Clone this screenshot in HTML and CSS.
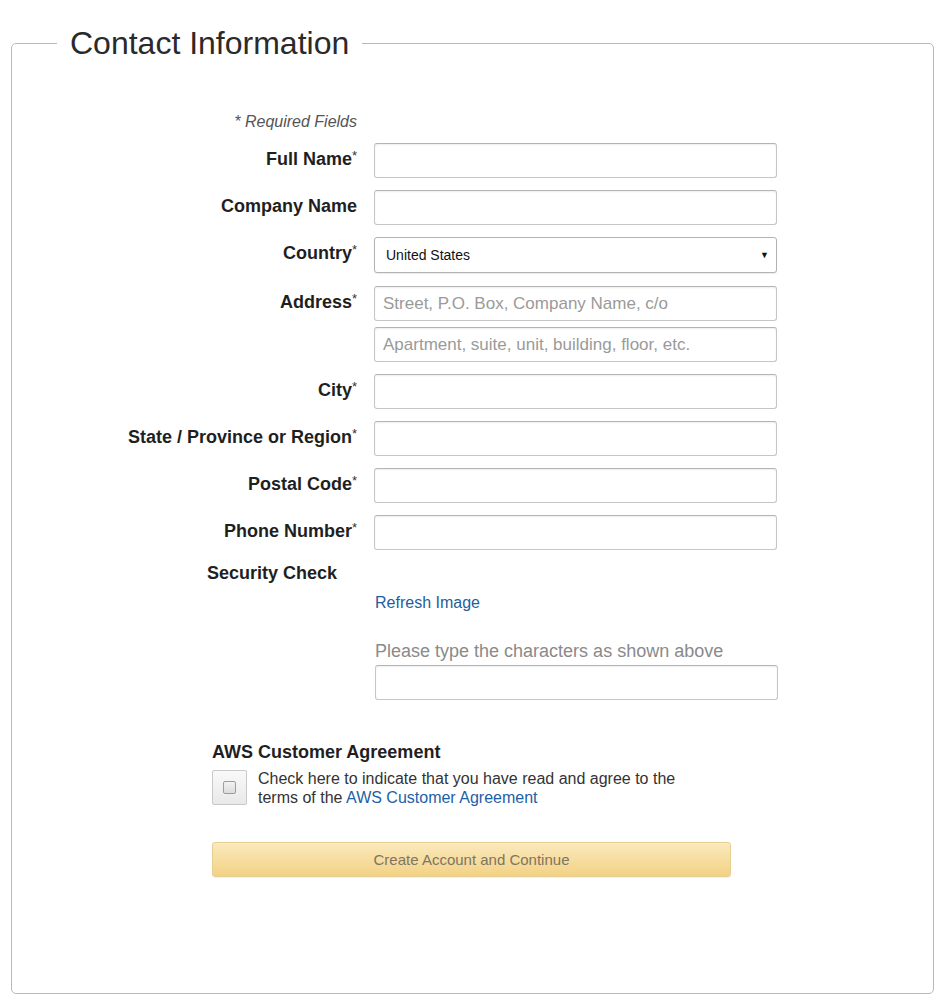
FILE: index.html
```html
<!DOCTYPE html>
<html lang="en">
<head>
<meta charset="utf-8">
<title>Contact Information</title>
<link rel="stylesheet" href="styles.css">
</head>
<body>
<fieldset class="contact">
  <legend class="contact-legend">Contact Information</legend>
  <div class="form">
    <div class="req-row"><span class="req">* Required Fields</span></div>

    <div class="row">
      <label class="lbl">Full Name<span class="ast">*</span></label>
      <div class="ctl"><input class="txt" type="text"></div>
    </div>
    <div class="row">
      <label class="lbl">Company Name</label>
      <div class="ctl"><input class="txt" type="text"></div>
    </div>
    <div class="row">
      <label class="lbl">Country<span class="ast">*</span></label>
      <div class="ctl">
        <div class="select-wrap">
          <select class="sel"><option>United States</option></select>
          <span class="arrow">&#9660;</span>
        </div>
      </div>
    </div>
    <div class="row row-address">
      <label class="lbl">Address<span class="ast">*</span></label>
      <div class="ctl stack">
        <input class="txt" type="text" placeholder="Street, P.O. Box, Company Name, c/o">
        <input class="txt" type="text" placeholder="Apartment, suite, unit, building, floor, etc.">
      </div>
    </div>
    <div class="row">
      <label class="lbl">City<span class="ast">*</span></label>
      <div class="ctl"><input class="txt" type="text"></div>
    </div>
    <div class="row">
      <label class="lbl">State / Province or Region<span class="ast">*</span></label>
      <div class="ctl"><input class="txt" type="text"></div>
    </div>
    <div class="row">
      <label class="lbl">Postal Code<span class="ast">*</span></label>
      <div class="ctl"><input class="txt" type="text"></div>
    </div>
    <div class="row">
      <label class="lbl">Phone Number<span class="ast">*</span></label>
      <div class="ctl"><input class="txt" type="text"></div>
    </div>

    <div class="security">
      <div class="sec-title">Security Check</div>
      <div class="captcha">
        <a class="refresh" href="#">Refresh Image</a>
        <div class="captcha-hint">Please type the characters as shown above</div>
        <input class="txt captcha-input" type="text">
      </div>
    </div>

    <div class="agreement">
      <div class="agr-title">AWS Customer Agreement</div>
      <div class="agr-row">
        <span class="check-box"><span class="check-inner"></span></span>
        <p class="agr-text">Check here to indicate that you have read and agree to the terms of the <a class="agr-link" href="#">AWS Customer Agreement</a></p>
      </div>
      <button class="submit" type="button">Create Account and Continue</button>
    </div>
  </div>
</fieldset>
</body>
</html>
```

FILE: styles.css
```css
html, body {
  margin: 0;
  padding: 0;
  background: #ffffff;
}

body {
  font-family: "Liberation Sans", Arial, sans-serif;
  color: #222;
}

.contact {
  margin: 25px 7px 0 11px;
  padding: 0 0 116px 0;
  border: 1px solid #b9b9b9;
  border-radius: 5px;
  min-inline-size: 0;
}

.contact-legend {
  margin-left: 45px;
  padding: 0 13px;
  font-size: 32px;
  line-height: 36px;
  color: #2a2a2a;
  font-weight: normal;
}

.form {
  padding-top: 52px;
}

.req-row {
  display: grid;
  grid-template-columns: 345px;
}

.req {
  text-align: right;
  font-style: italic;
  font-size: 16px;
  line-height: 18px;
  color: #555;
}

.row {
  display: grid;
  grid-template-columns: 345px 403px;
  column-gap: 17px;
  margin-top: 12px;
  align-items: start;
}

.row-address {
  margin-top: 13px;
}

.lbl {
  text-align: right;
  font-weight: bold;
  font-size: 18px;
  line-height: 20px;
  padding-top: 6px;
  color: #1f1f1f;
}

.ast {
  font-weight: normal;
  font-size: 13px;
  vertical-align: 5px;
  line-height: 0;
  color: #333;
}

.ctl {
  display: block;
}

.stack {
  display: flex;
  flex-direction: column;
  gap: 6px;
}

.txt {
  display: block;
  box-sizing: border-box;
  width: 403px;
  height: 35px;
  margin: 0;
  padding: 0 8px;
  border: 1px solid #c6c6c6;
  border-top-color: #b4b4b4;
  border-radius: 3px;
  background: #fff;
  box-shadow: inset 0 1px 2px rgba(0, 0, 0, 0.07);
  font-family: "Liberation Sans", Arial, sans-serif;
  font-size: 17px;
  color: #222;
  outline: none;
}

.txt::placeholder {
  color: #9a9a9a;
}

.select-wrap {
  position: relative;
  width: 403px;
  height: 36px;
}

.sel {
  display: block;
  box-sizing: border-box;
  width: 403px;
  height: 36px;
  margin: 0;
  padding: 0 11px;
  appearance: none;
  -webkit-appearance: none;
  border: 1px solid #b3b3b3;
  border-radius: 3px;
  background: #fff;
  box-shadow: 0 1px 1px rgba(0, 0, 0, 0.08);
  font-family: "Liberation Sans", Arial, sans-serif;
  font-size: 14px;
  color: #111;
}

.arrow {
  position: absolute;
  right: 8px;
  top: 13px;
  font-size: 9px;
  line-height: 10px;
  color: #111;
  pointer-events: none;
}

.security {
  margin-top: 13px;
}

.sec-title {
  margin-left: 195px;
  font-weight: bold;
  font-size: 18px;
  line-height: 20px;
  color: #1f1f1f;
}

.captcha {
  margin-left: 363px;
  width: 403px;
  display: flex;
  flex-direction: column;
  align-items: flex-start;
}

.refresh {
  margin-top: 11px;
  font-size: 16px;
  line-height: 18px;
  color: #245e9c;
  text-decoration: none;
}

.captcha-hint {
  margin-top: 29px;
  font-size: 18px;
  line-height: 20px;
  color: #8a8a8a;
}

.captcha-input {
  margin-top: 4px;
}

.agreement {
  margin-left: 200px;
  margin-top: 42px;
}

.agr-title {
  font-weight: bold;
  font-size: 18px;
  line-height: 20px;
  color: #1f1f1f;
}

.agr-row {
  margin-top: 8px;
  display: flex;
  align-items: flex-start;
  gap: 11px;
}

.check-box {
  box-sizing: border-box;
  width: 35px;
  height: 35px;
  flex: none;
  display: flex;
  align-items: center;
  justify-content: center;
  border: 1px solid #c9c9c9;
  border-radius: 2px;
  background: linear-gradient(#f9f9f9, #e9e9e9);
}

.check-inner {
  box-sizing: border-box;
  width: 13px;
  height: 13px;
  border: 1px solid #9d9d9d;
  border-radius: 2px;
  background: linear-gradient(#f2f2f2, #dcdcdc);
}

.agr-text {
  max-width: 450px;
  margin: -1px 0 0 0;
  font-size: 16px;
  line-height: 19px;
  color: #333;
}

.agr-link {
  color: #1d60a8;
  text-decoration: none;
}

.submit {
  display: block;
  box-sizing: border-box;
  margin-top: 35px;
  width: 519px;
  height: 35px;
  padding: 0;
  border: 1px solid #e7cf93;
  border-radius: 3px;
  background: linear-gradient(#fbe9bd, #f2d284);
  box-shadow: 0 1px 1px rgba(0, 0, 0, 0.06);
  font-family: "Liberation Sans", Arial, sans-serif;
  font-size: 15px;
  color: #7f7561;
  cursor: pointer;
}
```
